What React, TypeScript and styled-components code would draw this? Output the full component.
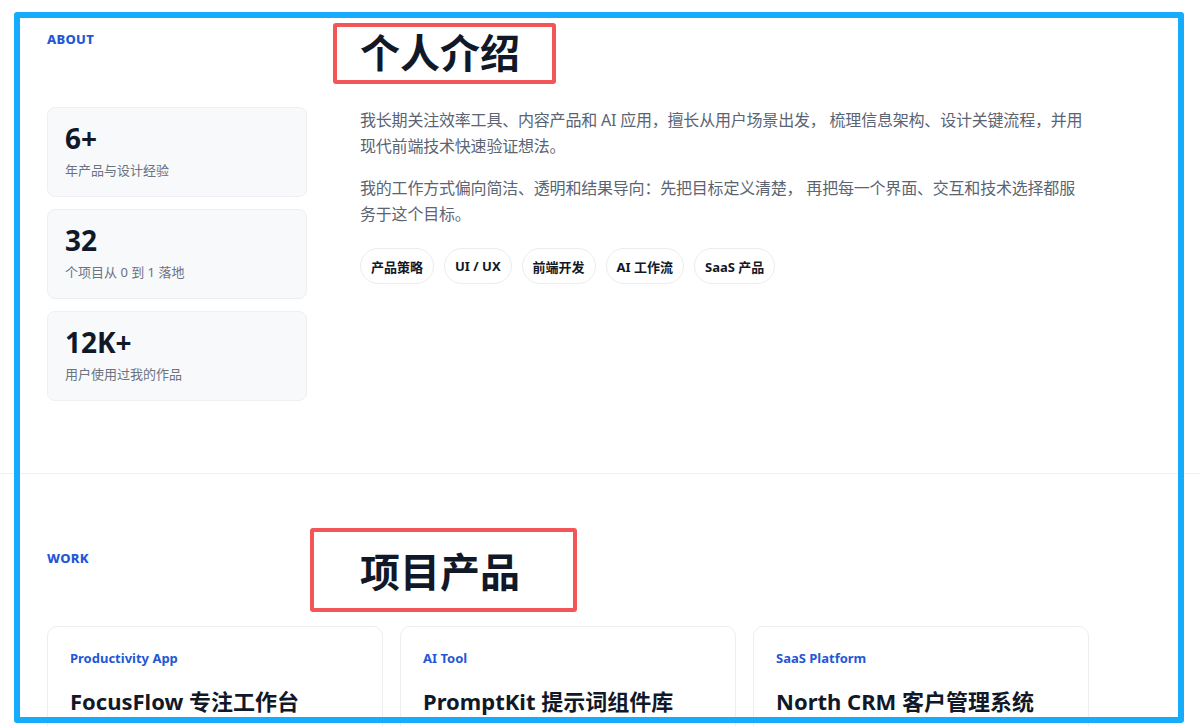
import React from "react";
import styled, {createGlobalStyle} from "styled-components";

const GlobalStyle = createGlobalStyle`
    * {
        box-sizing: border-box;
    }
    body {
        margin: 0;
        background: #ffffff;
        color: #111827;
        font-family: "Noto Sans", "Noto Sans CJK SC", sans-serif;
    }
`

const Page = styled.div`
        position: relative;
        min-height: 100vh;
        background: white;
`

const Section = styled.section<{ top: number; bottom: number }>`
        padding: ${p => p.top}px 0 ${p => p.bottom}px;
        border-bottom: 1px solid #eef0f3;
        
        &:last-of-type{
            border-bottom: none;
        }
`

const Inner = styled.div`
        width: 1102px;
        padding-left: 47px;
`

const SectionHead = styled.div`
        display: grid;
        grid-template-columns: 260px 1fr;
        column-gap: 53px;
        align-items: start;
        margin-bottom: 30px;
`

const Eyebrow = styled.div`
        font-size: 13px;
        line-height: 20px;
        font-weight: 800;
        color: #2457d6;
        letter-spacing: 0.3px;
`

const Heading = styled.h2`
        position: relative;
        justify-self: start;
        margin: 0;
        font-size: 40px;
        line-height: 48px;
        font-weight: 700;
        color: #111827;
`

// 截图上的红色标注框
const Mark = styled.span<{ dx: number; dy: number; dr: number; db: number }>`
        position: absolute;
        left: ${p => -p.dx}px;
        top: ${p => -p.dy}px;
        right: ${p => -p.dr}px;
        bottom: ${p => -p.db}px;
        border: 4px solid #f25656;
        border-radius: 3px;
        pointer-events: none;
`

// 截图上的蓝色外框
const Frame = styled.div`
        position: fixed;
        left: 14px;
        top: 12px;
        width: 1170px;
        height: 711px;
        border: 6px solid #17abfb;
        border-radius: 3px;
        pointer-events: none;
        z-index: 10;
`

const AboutBody = styled.div`
        display: grid;
        grid-template-columns: 260px 1fr;
        column-gap: 53px;
        align-items: start;
`

const Stats = styled.div`
        display: flex;
        flex-direction: column;
        gap: 12px;
`

const StatCard = styled.div`
        background: #f8f9fb;
        border: 1px solid #edeff2;
        border-radius: 8px;
        padding: 13px 17px 16px;
`

const StatValue = styled.div`
        font-size: 28px;
        line-height: 34px;
        font-weight: 700;
        color: #111827;
`

const StatLabel = styled.div`
        margin-top: 5px;
        font-size: 13px;
        line-height: 20px;
        color: #6b7280;
`

const Intro = styled.div`
        max-width: 727px;
`

const Para = styled.p`
        margin: 0 0 16px;
        font-size: 16px;
        line-height: 26px;
        letter-spacing: -0.2px;
        color: #5b6472;
`

const Tags = styled.div`
        display: flex;
        flex-wrap: wrap;
        gap: 10px;
        margin-top: 21px;
`

const Tag = styled.span`
        display: inline-flex;
        align-items: center;
        height: 36px;
        padding: 0 10px;
        border: 1px solid #eaecf0;
        border-radius: 18px;
        background: white;
        font-size: 13px;
        font-weight: 700;
        color: #111827;
`

const ProjectGrid = styled.div`
        display: grid;
        grid-template-columns: repeat(3, 336px);
        column-gap: 17px;
`

const ProjectCard = styled.div`
        background: white;
        border: 1px solid #eceef2;
        border-radius: 10px;
        padding: 21px 22px 40px;
`

const Category = styled.div`
        font-size: 13px;
        line-height: 20px;
        font-weight: 700;
        color: #2457d6;
`

const ProjectTitle = styled.h3`
        margin: 19px 0 0;
        font-size: 22px;
        line-height: 29px;
        font-weight: 700;
        color: #111827;
`

const stats = [
    {value: '6+', label: '年产品与设计经验'},
    {value: '32', label: '个项目从 0 到 1 落地'},
    {value: '12K+', label: '用户使用过我的作品'},
]

const skills = ['产品策略', 'UI / UX', '前端开发', 'AI 工作流', 'SaaS 产品']

const projects = [
    {category: 'Productivity App', title: 'FocusFlow 专注工作台'},
    {category: 'AI Tool', title: 'PromptKit 提示词组件库'},
    {category: 'SaaS Platform', title: 'North CRM 客户管理系统'},
]

const App = () => {
    return (
        <Page>
            <GlobalStyle/>
            <Section top={29} bottom={72}>
                <Inner>
                    <SectionHead>
                        <Eyebrow>ABOUT</Eyebrow>
                        <Heading>
                            个人介绍
                            <Mark dx={27} dy={6} dr={36} db={7}/>
                        </Heading>
                    </SectionHead>
                    <AboutBody>
                        <Stats>
                            {stats.map(s =>
                                <StatCard key={s.value}>
                                    <StatValue>{s.value}</StatValue>
                                    <StatLabel>{s.label}</StatLabel>
                                </StatCard>
                            )}
                        </Stats>
                        <Intro>
                            <Para>我长期关注效率工具、内容产品和 AI 应用，擅长从用户场景出发， 梳理信息架构、设计关键流程，并用现代前端技术快速验证想法。</Para>
                            <Para>我的工作方式偏向简洁、透明和结果导向：先把目标定义清楚， 再把每一个界面、交互和技术选择都服务于这个目标。</Para>
                            <Tags>
                                {skills.map(t => <Tag key={t}>{t}</Tag>)}
                            </Tags>
                        </Intro>
                    </AboutBody>
                </Inner>
            </Section>

            <Section top={74} bottom={80}>
                <Inner>
                    <SectionHead>
                        <Eyebrow>WORK</Eyebrow>
                        <Heading>
                            项目产品
                            <Mark dx={50} dy={20} dr={57} db={16}/>
                        </Heading>
                    </SectionHead>
                    <ProjectGrid>
                        {projects.map(p =>
                            <ProjectCard key={p.title}>
                                <Category>{p.category}</Category>
                                <ProjectTitle>{p.title}</ProjectTitle>
                            </ProjectCard>
                        )}
                    </ProjectGrid>
                </Inner>
            </Section>
            <Frame/>
        </Page>
    )
}

export default App
